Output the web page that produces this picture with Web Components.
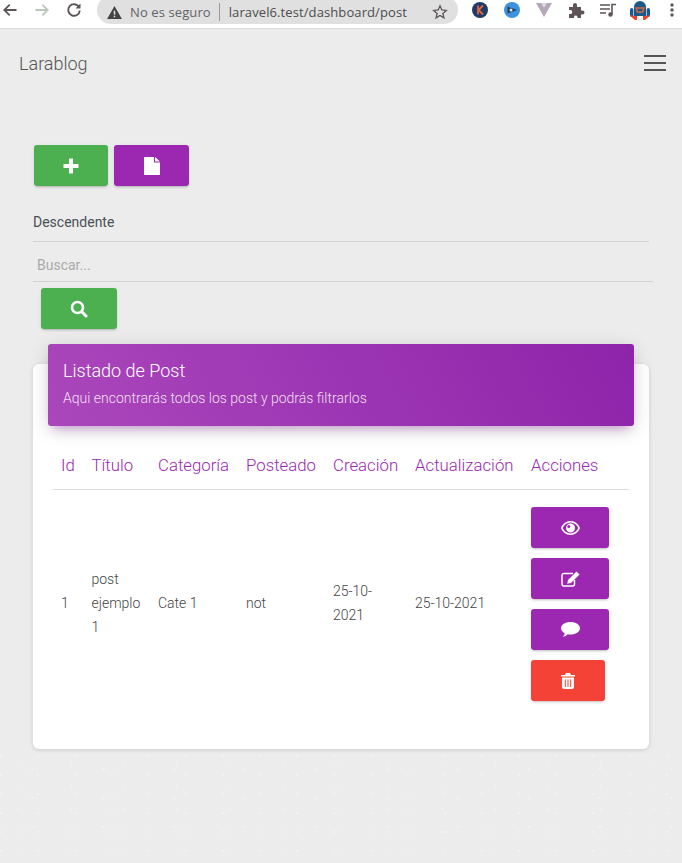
<!DOCTYPE html>
<html lang="es"><head><meta charset="utf-8"><title>Larablog</title>
<style>
html,body{margin:0;padding:0;height:863px;overflow:hidden}
body{font-family:Roboto,"Liberation Sans",sans-serif;color:#555;background:#ececec}
</style></head><body>
<browser-bar></browser-bar>
<app-nav brand="Larablog"></app-nav>
<main-area>
  <app-btn slot="actions" color="#4caf50" w="74"><svg width="16" height="16" viewBox="0 0 16 16"><path fill="#fff" d="M6.500 .5h3a.5.5 0 0 1 .5.5v5h5a.5.5 0 0 1 .5.5v3a.5.5 0 0 1-.5.5h-5v5a.5.5 0 0 1-.5.5h-3a.5.5 0 0 1-.5-.5v-5H1a.5.5 0 0 1-.5-.5v-3A.5.5 0 0 1 1 6h5V1a.5.5 0 0 1 .5-.5z"/></svg></app-btn>
  <app-btn slot="actions" color="#9c27b0" w="75"><svg width="16" height="18" viewBox="0 0 16 18"><path fill="#fff" d="M0 .6A.6.6 0 0 1 .6 0H10v5.500h6v11.900a.6.6 0 0 1-.6.6H.6a.6.6 0 0 1-.6-.6zM11 0l5 4.500h-5z"/></svg></app-btn>
  <post-card slot="card" title="Listado de Post" sub="Aqui encontrarás todos los post y podrás filtrarlos"></post-card>
</main-area>
<bg-speckle></bg-speckle>
<script>
function def(name,css,html,init){customElements.define(name,class extends HTMLElement{constructor(){super();const s=this.attachShadow({mode:'open'});s.innerHTML='<style>'+css+'</style>'+(typeof html==='function'?html(this):html);}connectedCallback(){if(init)init(this,this.shadowRoot);}});}

def('browser-bar',`
:host{display:flex;align-items:center;box-sizing:border-box;height:29px;background:#fff;border-bottom:1px solid #dadada;font:13px "Open Sans","Noto Sans",sans-serif;color:#5f6368;padding-bottom:8px;overflow:hidden}
svg{display:block;flex:none}
.nav{display:flex;align-items:center;margin-left:1px;gap:14px}
.omni{flex:none;display:flex;align-items:center;box-sizing:border-box;width:361px;height:28px;margin-left:14px;background:#e0e0e0;border-radius:14px;padding:4px 0 0 10px;white-space:nowrap;letter-spacing:.1px}
.sep{width:1px;height:18px;background:#9a9a9a;margin:0 9px 0 8px}
.url{color:#4d4d4d}
.tools{display:flex;align-items:center;margin-left:6px;flex:none}
.tools span{display:flex;justify-content:center;width:32px}
.star{margin-left:auto;margin-right:10px}
`,`
<div class="nav">
<svg width="18" height="18" viewBox="0 0 18 18"><path fill="none" stroke="#5c5557" stroke-width="1.800" d="M15.500 9H3.500M8.700 3.700 3.300 9l5.400 5.300"/></svg>
<svg width="18" height="18" viewBox="0 0 18 18"><path fill="none" stroke="#b9c8bb" stroke-width="1.800" d="M2.500 9h12M9.300 3.700 14.700 9l-5.400 5.300"/></svg>
<svg width="18" height="18" viewBox="0 0 18 18"><path fill="none" stroke="#5c5557" stroke-width="1.900" d="M14 6a5.800 5.800 0 1 0 .8 3.500"/><path fill="#5c5557" d="M15.500 2.500v5h-5z"/></svg>
</div>
<div class="omni">
<svg width="15" height="13" viewBox="0 0 16 14" style="margin-right:8px"><path fill="#444" d="M8 0 16 14H0z"/><path fill="#e0e0e0" d="M7.200 5h1.600v4.500H7.200zM7.200 10.500h1.600V12H7.200z"/></svg>
<span>No es seguro</span><span class="sep"></span><span class="url">laravel6.test/dashboard/post</span>
<svg class="star" width="16" height="16" viewBox="0 0 16 16"><path fill="none" stroke="#5c5557" stroke-width="1.300" d="M8 1.800 9.800 6l4.500.4-3.400 3 1 4.400L8 11.500l-3.900 2.300 1-4.400-3.400-3L6.200 6z"/></svg>
</div>
<div class="tools">
<span><svg width="18" height="18" viewBox="0 0 18 18"><circle cx="9" cy="9" r="8" fill="#1f3a68"/><path fill="none" stroke="#e0693a" stroke-width="1.800" d="M7 4.500v9M12 4.500 7.500 9l4.500 4.500"/></svg></span>
<span><svg width="18" height="18" viewBox="0 0 18 18"><circle cx="9" cy="9" r="8" fill="#3c92dc"/><path fill="#20405f" d="M4.500 5.500 14 9l-9.500 3.500z"/><circle cx="8" cy="9" r="1.500" fill="#dce9f2"/></svg></span>
<span><svg width="18" height="18" viewBox="0 0 18 18"><path fill="#b3a7b8" d="M1 2h16L9 16z"/><path fill="#fff" d="M6 2h6L9 7z" opacity=".55"/></svg></span>
<span><svg width="18" height="18" viewBox="0 0 18 18"><path fill="#5f5557" d="M2 6h4V4a2 2 0 0 1 4 0v2h4v3.500h1.500a2 2 0 0 1 0 4H14V17h-3.500v-1a1.800 1.800 0 0 0-3.500 0v1H2v-4h1.300a2 2 0 0 0 0-4H2z"/></svg></span>
<span><svg width="18" height="18" viewBox="0 0 18 18"><path fill="none" stroke="#5f5557" stroke-width="1.400" d="M1 4h10M1 8h10M1 12h6"/><path fill="none" stroke="#5f5557" stroke-width="1.600" d="M13 13V3.500h4"/><circle cx="11.500" cy="13.500" r="2.200" fill="#5f5557"/></svg></span>
<span><svg width="20" height="22" viewBox="0 0 20 22"><path fill="#1c5a8c" d="M4 8a6 6 0 0 1 12 0v9H4z"/><rect x="0" y="9" width="3.400" height="9" rx="1.700" fill="#1c5a8c"/><rect x="16.600" y="9" width="3.400" height="9" rx="1.700" fill="#1c5a8c"/><path fill="#e8452c" d="M0 16c2 3 4 4 5 5h2v-4H4zM20 16c-2 3-4 4-5 5h-2v-4h3z"/><path fill="none" stroke="#e0693a" stroke-width="1.300" d="M6 9h8l-1.500 4h-5z"/><path fill="#cfd8dc" d="M8 19h4v3H8z" opacity=".5"/></svg></span>
<span><svg width="4" height="16" viewBox="0 0 4 16"><circle cx="2" cy="3" r="1.700" fill="#5f5557"/><circle cx="2" cy="8" r="1.700" fill="#5f5557"/><circle cx="2" cy="13" r="1.700" fill="#5f5557"/></svg></span>
</div>`);

def('app-nav',`
:host{display:flex;align-items:center;justify-content:space-between;box-sizing:border-box;height:68px;padding:0 16px 0 19px}
.brand{font-size:18px;color:#555;font-weight:300}
.bars{display:flex;flex-direction:column;gap:4.700px}
.bars i{display:block;width:22px;height:2px;background:#555}
`,el=>`<span class="brand">${el.getAttribute('brand')}</span><span class="bars"><i></i><i></i><i></i></span>`);

def('app-btn',`
:host{display:inline-flex;align-items:center;justify-content:center;box-sizing:border-box;height:41px;border-radius:3px;color:#fff;box-shadow:0 2px 2px 0 rgba(0,0,0,.07),0 3px 1px -2px rgba(0,0,0,.1),0 1px 5px 0 rgba(0,0,0,.06)}
svg{display:block}
`,'<slot></slot>',(el)=>{el.style.background=el.getAttribute('color');el.style.width=el.getAttribute('w')+'px';});

def('main-area',`
:host{display:block;padding:48px 0 0 33px;width:620px}
.actions{display:flex;gap:6px;padding-left:1px}
.select{width:616px;box-sizing:border-box;height:40px;margin-top:16px;border-bottom:1px solid #d2d2d2;font-size:14px;line-height:40px;color:#495057}
.search{box-sizing:border-box;width:620px;height:40px;border-bottom:1px solid #d2d2d2;padding-left:4px;font-size:14px;line-height:47px;color:#aaa}
.sb{margin:6px 0 0 8px;height:41px}
.cardwrap{padding-top:35px}
`,`<div class="actions"><slot name="actions"></slot></div>
<div class="select">Descendente</div>
<div class="search">Buscar...</div>
<div class="sb"><app-btn color="#4caf50" w="76"><svg width="18" height="18" viewBox="0 0 18 18"><circle cx="7.500" cy="7.500" r="5.500" fill="none" stroke="#fff" stroke-width="2.600"/><path stroke="#fff" stroke-width="3" stroke-linecap="round" d="M11.800 11.800 16 16"/></svg></app-btn></div>
<div class="cardwrap"><slot name="card"></slot></div>`);

def('post-card',`
:host{display:flow-root;box-sizing:border-box;width:616px;height:385px;background:#fff;border-radius:6px;box-shadow:0 1px 4px 0 rgba(0,0,0,.14);padding:0 20px}
.head{box-sizing:border-box;height:82px;margin:-20px -5px 0;padding:16px 15px 0;border-radius:3px;color:#fff;background:linear-gradient(60deg,#ab47bc,#8e24aa);box-shadow:0 4px 20px 0 rgba(0,0,0,.14),0 7px 10px -5px rgba(156,39,176,.4)}
h4{margin:0;font-size:18px;font-weight:300;line-height:22px}
p{margin:6px 0 0;font-size:14px;line-height:20px;font-weight:300;color:rgba(255,255,255,.85)}
table{border-collapse:collapse;table-layout:fixed;width:576px;margin-top:17px;font-size:14px;font-weight:300;color:#444}
th{font-size:16.800px;font-weight:300;color:#9c27b0;text-align:left;padding:0 0 2px 8px;height:44px;border-bottom:1px solid #ddd;white-space:nowrap}
td{padding:0 8px 2px;line-height:24px;height:226px;vertical-align:middle}
td.a{padding-bottom:0}
.acts{display:flex;flex-direction:column;gap:10px;align-items:flex-start}
`,el=>`<div class="head"><h4>${el.getAttribute('title')}</h4><p>${el.getAttribute('sub')}</p></div>
<table><colgroup><col style="width:30.500px"><col style="width:66.500px"><col style="width:88px"><col style="width:87px"><col style="width:82px"><col style="width:116px"><col></colgroup>
<thead><tr><th>Id</th><th>Título</th><th>Categoría</th><th>Posteado</th><th>Creación</th><th>Actualización</th><th>Acciones</th></tr></thead>
<tbody><tr><td>1</td><td>post ejemplo 1</td><td>Cate 1</td><td>not</td><td>25-10-2021</td><td>25-10-2021</td><td class="a"><div class="acts">
<app-btn color="#9c27b0" w="78"><svg width="19" height="14" viewBox="0 0 19 14"><path fill="#fff" fill-rule="evenodd" d="M9.500 0C14 0 17.500 3.200 19 7c-1.500 3.800-5 7-9.500 7S1.500 10.800 0 7C1.500 3.200 5 0 9.500 0zm0 1.500C6 1.500 3.200 3.800 1.700 7 3.200 10.200 6 12.500 9.500 12.500S15.800 10.200 17.300 7C15.800 3.800 13 1.500 9.500 1.500zM9.500 2.500a4.500 4.500 0 1 1 0 9 4.500 4.500 0 0 1 0-9z"/><circle cx="7.800" cy="5.500" r="1.500" fill="#9c27b0"/></svg></app-btn>
<app-btn color="#9c27b0" w="78"><svg width="19" height="16" viewBox="0 0 19 16"><path fill="none" stroke="#fff" stroke-width="1.500" d="M12 2.500H3A2 2 0 0 0 1 4.500v8.500a2 2 0 0 0 2 2h8.500a2 2 0 0 0 2-2V9"/><path fill="#fff" d="M15.500.5 18.500 3.500 10 12l-3.800.8.800-3.800z"/></svg></app-btn>
<app-btn color="#9c27b0" w="78"><svg width="19" height="15" viewBox="0 0 19 15"><path fill="#fff" d="M9.500 0C14.700 0 19 2.700 19 6.300s-4.300 6.300-9.500 6.300c-1 0-1.900-.1-2.800-.3C5.500 13.500 3.800 14.700 1.800 15c.9-1 1.600-2.200 1.900-3.800C1.500 10.100 0 8.300 0 6.300 0 2.700 4.300 0 9.500 0z"/></svg></app-btn>
<app-btn color="#f44336" w="74"><svg width="14" height="16" viewBox="0 0 14 16"><path fill="#fff" fill-rule="evenodd" d="M5 0h4l1 2h4v1.500H0V2h4zM1 4.500h12V14a2 2 0 0 1-2 2H3a2 2 0 0 1-2-2zM3.800 6.500v7.500h1V6.500zM6.500 6.500v7.500h1V6.500zM9.200 6.500v7.500h1V6.500z"/></svg></app-btn>
</div></td></tr></tbody></table>`);

def('bg-speckle',`
:host{display:block;height:100px;margin-top:6px;background-image:radial-gradient(circle at 1px 1px,#f1f1f1 .7px,transparent 1.100px),radial-gradient(circle at 1px 1px,#f0f0f0 .7px,transparent 1.100px),radial-gradient(circle at 1px 1px,#f1f1f1 .7px,transparent 1.100px);background-size:37px 19px,53px 23px,71px 29px;background-position:0 0,17px 7px,31px 13px}
`,'');
</script>
</body></html>
